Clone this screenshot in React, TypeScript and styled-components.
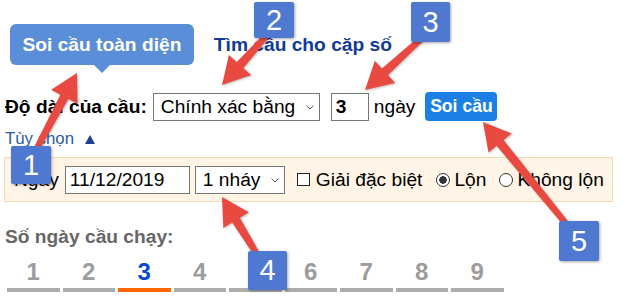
import styled, { createGlobalStyle } from 'styled-components';

const GlobalStyle = createGlobalStyle`
  body {
    margin: 0;
    background: #ffffff;
    font-family: 'Liberation Sans', Arial, sans-serif;
    font-size: 19.2px;
    color: #000000;
  }
`;

const Page = styled.div`
  position: relative;
  width: 644px;
  height: 306px;
  padding: 0 4px;
  box-sizing: border-box;
  overflow: hidden;
`;

const TabBar = styled.div`
  display: flex;
  align-items: center;
  padding-top: 24px;
`;

const ActiveTab = styled.div`
  position: relative;
  display: flex;
  align-items: center;
  height: 41px;
  margin-left: 6px;
  padding: 0 12.5px;
  border-radius: 6px;
  background: #5b8ed8;
  color: #ffffff;
  font-weight: bold;

  &::after {
    content: '';
    position: absolute;
    left: 50%;
    bottom: -8px;
    margin-left: -8px;
    border-left: 8px solid transparent;
    border-right: 8px solid transparent;
    border-top: 8px solid #5b8ed8;
  }
`;

const LinkTab = styled.a`
  margin-left: 20px;
  color: #0f3a9c;
  font-weight: bold;
  text-decoration: none;
`;

const LengthRow = styled.div`
  display: flex;
  align-items: center;
  height: 29px;
  margin-top: 27px;
`;

const Label = styled.span<{ $bold?: boolean; $gap?: number }>`
  margin-left: ${(p) => p.$gap ?? 0}px;
  font-weight: ${(p) => (p.$bold ? 'bold' : 'normal')};
  white-space: nowrap;
`;

const SelectWrap = styled.span<{ $width: number; $gap: number }>`
  position: relative;
  display: inline-flex;
  width: ${(p) => p.$width}px;
  height: 28px;
  margin-left: ${(p) => p.$gap}px;
`;

const Select = styled.select`
  appearance: none;
  width: 100%;
  height: 100%;
  padding: 0 0 0 7px;
  border: 1px solid #767676;
  border-radius: 0;
  background: #ffffff;
  font: inherit;
  color: #000000;
`;

const Chevron = styled.svg`
  position: absolute;
  right: 6px;
  top: 12px;
  pointer-events: none;
`;

const TextInput = styled.input<{ $width: number; $gap: number; $bold?: boolean }>`
  width: ${(p) => p.$width}px;
  height: 28px;
  margin: 0 0 0 ${(p) => p.$gap}px;
  padding: 0 0 0 4px;
  box-sizing: border-box;
  border: 1px solid #767676;
  font: inherit;
  font-weight: ${(p) => (p.$bold ? 'bold' : 'normal')};
  color: #000000;
`;

const RunButton = styled.button`
  height: 29px;
  margin-left: 10px;
  padding: 0 4px;
  width: 72px;
  border: none;
  border-radius: 4px;
  background: #1a80e5;
  color: #ffffff;
  font-family: inherit;
  font-size: 17.6px;
  font-weight: bold;
`;

const OptionsToggle = styled.div`
  display: flex;
  align-items: center;
  height: 20px;
  margin-top: 8px;
  margin-left: 1px;
  color: #2c5aa8;
  font-size: 16.8px;
`;

const UpTriangle = styled.span`
  display: inline-block;
  margin-left: 11px;
  border-left: 5.5px solid transparent;
  border-right: 5.5px solid transparent;
  border-bottom: 9px solid #1f3e8f;
`;

const OptionsPanel = styled.div`
  display: flex;
  align-items: center;
  width: 609px;
  height: 45px;
  margin-top: 8px;
  padding-left: 9px;
  box-sizing: border-box;
  border: 1px solid #f1dcaf;
  background: #fff4e6;
`;

const Choice = styled.label<{ $gap: number }>`
  display: inline-flex;
  align-items: center;
  margin-left: ${(p) => p.$gap}px;
  white-space: nowrap;
`;

const CheckBox = styled.input`
  appearance: none;
  width: 13px;
  height: 13px;
  margin: 0 6px 0 0;
  border: 1.5px solid #222222;
  background: #ffffff;
`;

const Radio = styled.input`
  appearance: none;
  width: 14px;
  height: 14px;
  margin: 0 4px 0 0;
  border: 1.5px solid #333333;
  border-radius: 50%;
  background: #ffffff;

  &:checked {
    background: radial-gradient(circle, #333333 0 3.5px, #ffffff 4px);
  }
`;

const RunTitle = styled.div`
  margin-top: 24px;
  margin-left: 1px;
  line-height: 22px;
  color: #666666;
  font-weight: bold;
`;

const DayTabs = styled.div`
  display: grid;
  grid-template-columns: repeat(9, 52.5px);
  column-gap: 3px;
  margin-top: 12px;
  margin-left: 3px;
`;

const DayTab = styled.div<{ $active?: boolean }>`
  padding-bottom: 4px;
  line-height: 24px;
  text-align: center;
  font-size: 24px;
  font-weight: bold;
  color: ${(p) => (p.$active ? '#0b4bd0' : '#9c9c9c')};
  border-bottom: 4px solid ${(p) => (p.$active ? '#ff6600' : '#adadad')};
`;

const ArrowLayer = styled.svg`
  position: absolute;
  left: 0;
  top: 0;
  z-index: 2;
  pointer-events: none;
  filter: drop-shadow(1px 1px 1px rgba(0, 0, 0, 0.25));
`;

const Badge = styled.div<{ $x: number; $y: number; $w: number; $h: number }>`
  position: absolute;
  left: ${(p) => p.$x}px;
  top: ${(p) => p.$y}px;
  z-index: 3;
  display: flex;
  align-items: center;
  justify-content: center;
  width: ${(p) => p.$w}px;
  height: ${(p) => p.$h}px;
  border-radius: 2px;
  background: #4f79d1;
  color: #ffffff;
  font-size: 29px;
  box-shadow: 1px 1px 3px rgba(0, 0, 0, 0.35);
`;

type Arrow = { from: [number, number]; to: [number, number] };

const arrows: Arrow[] = [
  { from: [36, 150], to: [77, 73] },
  { from: [268, 34], to: [222, 85] },
  { from: [422, 38], to: [365, 90] },
  { from: [258, 256], to: [222, 197] },
  { from: [568, 226], to: [483, 122] },
];

const badges = [
  { n: 1, x: 11, y: 146, w: 40, h: 38 },
  { n: 2, x: 254, y: 2, w: 40, h: 36 },
  { n: 3, x: 411, y: 2, w: 39, h: 40 },
  { n: 4, x: 248, y: 251, w: 39, h: 39 },
  { n: 5, x: 559, y: 221, w: 40, h: 40 },
];

function arrowPoints({ from, to }: Arrow) {
  const [x1, y1] = from;
  const [x2, y2] = to;
  const len = Math.hypot(x2 - x1, y2 - y1);
  const ux = (x2 - x1) / len;
  const uy = (y2 - y1) / len;
  const nx = -uy;
  const ny = ux;
  const headLen = 27;
  const headHalf = 15;
  const bx = x2 - ux * headLen;
  const by = y2 - uy * headLen;
  const pts = [
    [x1 + nx * 3, y1 + ny * 3],
    [bx + nx * 4.5, by + ny * 4.5],
    [bx + nx * headHalf, by + ny * headHalf],
    [x2, y2],
    [bx - nx * headHalf, by - ny * headHalf],
    [bx - nx * 4.5, by - ny * 4.5],
    [x1 - nx * 3, y1 - ny * 3],
  ];
  return pts.map(([x, y]) => `${x.toFixed(1)},${y.toFixed(1)}`).join(' ');
}

function ChevronDown() {
  return (
    <Chevron width="8" height="5" viewBox="0 0 8 5">
      <path d="M0.5 0.5 L4 4 L7.5 0.5" fill="none" stroke="#555" strokeWidth="1" />
    </Chevron>
  );
}

export default function App() {
  const days = [1, 2, 3, 4, 5, 6, 7, 8, 9];

  return (
    <Page>
      <GlobalStyle />
      <TabBar>
        <ActiveTab>Soi cầu toàn diện</ActiveTab>
        <LinkTab href="#">Tìm cầu cho cặp số</LinkTab>
      </TabBar>

      <LengthRow>
        <Label $bold $gap={1}>Độ dài của cầu:</Label>
        <SelectWrap $width={167} $gap={6}>
          <Select defaultValue="exact">
            <option value="exact">Chính xác bằng</option>
            <option value="min">Tối thiểu</option>
          </Select>
          <ChevronDown />
        </SelectWrap>
        <TextInput $width={38} $gap={11} $bold defaultValue="3" />
        <Label $gap={5}>ngày</Label>
        <RunButton>Soi cầu</RunButton>
      </LengthRow>

      <OptionsToggle>
        Tùy chọn
        <UpTriangle />
      </OptionsToggle>

      <OptionsPanel>
        <Label>Ngày</Label>
        <TextInput $width={125} $gap={6} defaultValue="11/12/2019" />
        <SelectWrap $width={90} $gap={5}>
          <Select defaultValue="1">
            <option value="1">1 nháy</option>
            <option value="2">2 nháy</option>
          </Select>
          <ChevronDown />
        </SelectWrap>
        <Choice $gap={12}>
          <CheckBox type="checkbox" />
          Giải đặc biệt
        </Choice>
        <Choice $gap={14}>
          <Radio type="radio" name="mode" defaultChecked />
          Lộn
        </Choice>
        <Choice $gap={13}>
          <Radio type="radio" name="mode" />
          Không lộn
        </Choice>
      </OptionsPanel>

      <RunTitle>Số ngày cầu chạy:</RunTitle>
      <DayTabs>
        {days.map((d) => (
          <DayTab key={d} $active={d === 3}>
            {d}
          </DayTab>
        ))}
      </DayTabs>

      <ArrowLayer width="644" height="306" viewBox="0 0 644 306">
        {arrows.map((a, i) => (
          <polygon key={i} points={arrowPoints(a)} fill="#e84a41" />
        ))}
      </ArrowLayer>
      {badges.map((b) => (
        <Badge key={b.n} $x={b.x} $y={b.y} $w={b.w} $h={b.h}>
          {b.n}
        </Badge>
      ))}
    </Page>
  );
}
